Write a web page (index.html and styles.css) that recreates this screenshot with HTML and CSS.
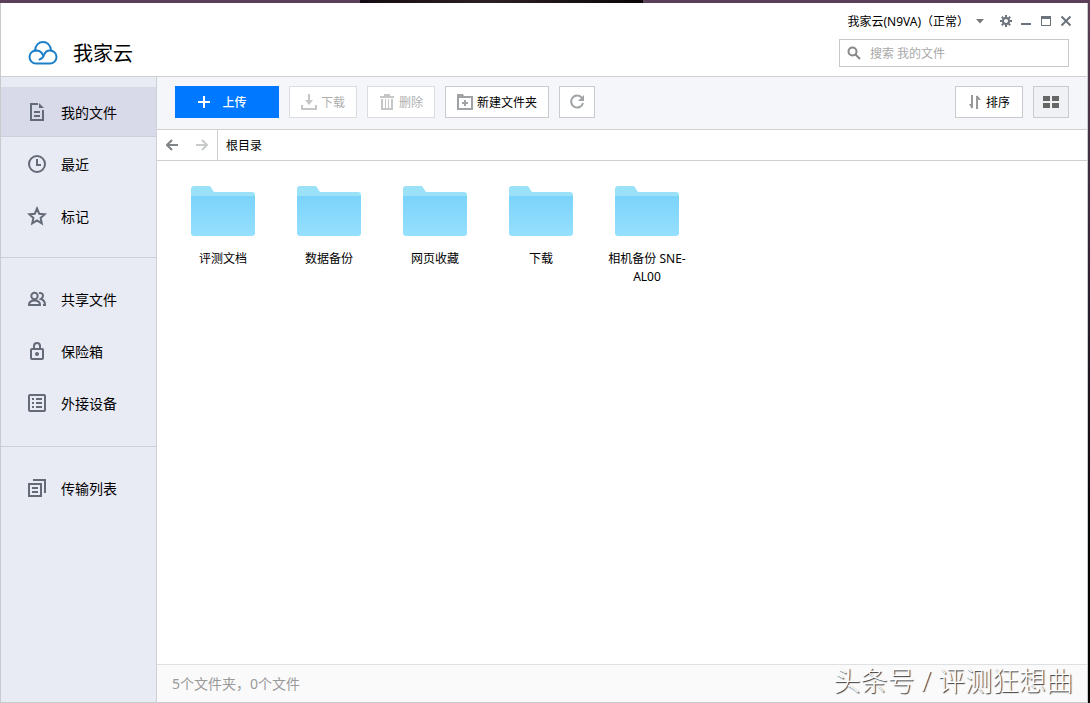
FILE: index.html
```html
<!DOCTYPE html>
<html lang="zh-CN">
<head>
    <meta charset="UTF-8">
    <meta name="viewport" content="width=device-width, initial-scale=1.0">
    <title>我家云</title>
    <link rel="stylesheet" href="styles.css">
</head>
<body>
    <div class="window">
        <header class="header">
            <div class="brand">
                <svg class="logo" viewBox="0 0 30 26" fill="none" stroke="#1c7fc8" stroke-width="2" stroke-linecap="round">
                    <path d="M8 10.500A6.500 6.500 0 0 0 8 23.500h14a6.500 6.500 0 0 0 0-13c-3 0-5 1.500-6 4.500s-2 4-4.500 4.500"></path>
                    <path d="M7 10.500C7.500 5 11 2 15 2s7.500 3 8 8.500"></path>
                    <path d="M8 10.500c3 0 5.500 1.200 7 4.500"></path>
                </svg>
                <h1>我家云</h1>
            </div>
            <div class="header-right">
                <div class="window-bar">
                    <button class="device" type="button">我家云(N9VA)（正常）
                        <svg width="8" height="5" viewBox="0 0 8 5" fill="#777"><path d="M0 0h8L4 4.500z"></path></svg>
                    </button>
                    <button class="win-btn" type="button" aria-label="设置">
                        <svg width="12" height="12" viewBox="0 0 12 12" fill="none" stroke="#6b737c">
                            <circle cx="6" cy="6" r="3" stroke-width="2"></circle>
                            <path d="M6 0v2M6 10v2M0 6h2M10 6h2M1.800 1.800l1.400 1.400M8.800 8.800l1.400 1.400M10.200 1.800L8.800 3.200M3.200 8.800l-1.400 1.400" stroke-width="2"></path>
                        </svg>
                    </button>
                    <button class="win-btn" type="button" aria-label="最小化">
                        <svg width="12" height="12" viewBox="0 0 12 12" fill="#6b737c"><path d="M1 8h10v2H1z"></path></svg>
                    </button>
                    <button class="win-btn" type="button" aria-label="最大化">
                        <svg width="12" height="12" viewBox="0 0 12 12" fill="#6b737c"><path d="M1 1h10v10H1zM2 4v6h8V4z" fill-rule="evenodd"></path></svg>
                    </button>
                    <button class="win-btn" type="button" aria-label="关闭">
                        <svg width="12" height="12" viewBox="0 0 12 12" stroke="#6b737c" stroke-width="2"><path d="M1.500 1.500l9 9M10.500 1.500l-9 9"></path></svg>
                    </button>
                </div>
                <label class="search">
                    <svg width="14" height="14" viewBox="0 0 14 14" fill="none" stroke="#888" stroke-width="2">
                        <circle cx="5.500" cy="5.500" r="4"></circle>
                        <path d="M8.500 8.500l4.500 4.500"></path>
                    </svg>
                    <input type="text" placeholder="搜索 我的文件" aria-label="搜索">
                </label>
            </div>
        </header>

        <div class="content">
            <nav class="sidebar">
                <div class="nav-group nav-main">
                    <a class="nav-item active" href="#">
                        <svg class="nav-icon" viewBox="0 0 20 20" fill="none" stroke="#646a78" stroke-width="2">
                            <path d="M11 2H4v16h12V8M7 10h6M7 14h6"></path>
                            <path d="M12 1l5 5h-5z" fill="#646a78" stroke="none"></path>
                        </svg>
                        我的文件
                    </a>
                    <a class="nav-item" href="#">
                        <svg class="nav-icon" viewBox="0 0 20 20" fill="none" stroke="#646a78" stroke-width="2">
                            <circle cx="10" cy="10" r="8"></circle>
                            <path d="M10 5v6h4"></path>
                        </svg>
                        最近
                    </a>
                    <a class="nav-item" href="#">
                        <svg class="nav-icon" viewBox="0 0 20 20" fill="none" stroke="#646a78" stroke-width="2">
                            <path d="M10 2.500l2.200 5.200 5.600.5-4.200 3.700 1.200 5.500L10 14.500l-4.800 2.900 1.200-5.500L2.200 8.200l5.600-.5z"></path>
                        </svg>
                        标记
                    </a>
                </div>
                <div class="nav-group">
                    <a class="nav-item" href="#">
                        <svg class="nav-icon" viewBox="0 0 20 20" fill="none" stroke="#646a78" stroke-width="2">
                            <circle cx="7.500" cy="7" r="3.200"></circle>
                            <path d="M2 16c0-3 2-4.500 5.500-4.500S13 13 13 16zM12 4c2.500-.5 4 .8 4 2.800 0 1.700-1 2.700-2 3.200 2.500.8 4 2.500 4 6h-2"></path>
                        </svg>
                        共享文件
                    </a>
                    <a class="nav-item" href="#">
                        <svg class="nav-icon" viewBox="0 0 20 20" fill="none" stroke="#646a78" stroke-width="2">
                            <rect x="4" y="8" width="12" height="10" rx="1"></rect>
                            <path d="M7 8V5a3 3 0 0 1 6 0v3"></path>
                            <circle cx="10" cy="13" r="2" fill="#646a78" stroke="none"></circle>
                        </svg>
                        保险箱
                    </a>
                    <a class="nav-item" href="#">
                        <svg class="nav-icon" viewBox="0 0 20 20" fill="none" stroke="#646a78" stroke-width="2">
                            <rect x="2" y="2" width="16" height="16" rx="1"></rect>
                            <path d="M5 6h2M5 10h2M5 14h2M9 6h6M9 10h6M9 14h6"></path>
                        </svg>
                        外接设备
                    </a>
                </div>
                <div class="nav-group">
                    <a class="nav-item" href="#">
                        <svg class="nav-icon" viewBox="0 0 20 20" fill="none" stroke="#646a78" stroke-width="2">
                            <path d="M2 6h12v12H2zM5 10h6M5 14h6M6 2h12v13"></path>
                        </svg>
                        传输列表
                    </a>
                </div>
            </nav>

            <main class="main">
                <div class="toolbar">
                    <button class="btn btn-primary" type="button">
                        <svg width="12" height="12" viewBox="0 0 12 12" stroke="#fff" stroke-width="2"><path d="M6 0v12M0 6h12"></path></svg>
                        上传
                    </button>
                    <button class="btn" type="button" disabled>
                        <svg width="16" height="16" viewBox="0 0 16 16" fill="none" stroke="#c4c6c8" stroke-width="2">
                            <path d="M8 0v7M1 11v4h14v-4"></path>
                            <path d="M4 6h8l-4 5z" fill="#c4c6c8" stroke="none"></path>
                        </svg>
                        下载
                    </button>
                    <button class="btn" type="button" disabled>
                        <svg width="16" height="16" viewBox="0 0 16 16" fill="none" stroke="#c4c6c8" stroke-width="2">
                            <path d="M1 3h14M5 1h6M3 5v10h10V5"></path>
                            <path d="M6.500 5v9M9.500 5v9" stroke-width="1"></path>
                        </svg>
                        删除
                    </button>
                    <button class="btn" type="button">
                        <svg width="16" height="16" viewBox="0 0 16 16" fill="none" stroke="#a0a3a5" stroke-width="2">
                            <path d="M1 3h14v12H1z"></path>
                            <path d="M8 6v6M5 9h6"></path>
                            <path d="M0 0h6l2 4H0z" fill="#a0a3a5" stroke="none"></path>
                        </svg>
                        新建文件夹
                    </button>
                    <button class="btn btn-square" type="button" aria-label="刷新">
                        <svg width="16" height="16" viewBox="0 0 16 16" fill="none" stroke="#a0a3a5" stroke-width="2">
                            <path d="M13 4a6 6 0 1 0 1 5"></path>
                            <path d="M15 1v6H9z" fill="#a0a3a5" stroke="none"></path>
                        </svg>
                    </button>
                    <button class="btn btn-sort" type="button">
                        <svg width="14" height="16" viewBox="0 0 14 16" fill="none" stroke="#999" stroke-width="2">
                            <path d="M4 1v13M9 15V2"></path>
                            <path d="M1 10h3v5zM9 1l4 5H9z" fill="#999" stroke="none"></path>
                        </svg>
                        排序
                    </button>
                    <button class="btn btn-square btn-view" type="button" aria-label="网格视图">
                        <svg width="16" height="12" viewBox="0 0 16 12" fill="#666"><path d="M0 0h7v5H0zM9 0h7v5H9zM0 7h7v5H0zM9 7h7v5H9z"></path></svg>
                    </button>
                </div>

                <div class="path-bar">
                    <div class="history">
                        <button type="button" aria-label="后退">
                            <svg width="12" height="12" viewBox="0 0 12 12" fill="none" stroke="#808488" stroke-width="2"><path d="M12 6H1M6 1L1 6l5 5"></path></svg>
                        </button>
                        <button type="button" aria-label="前进" disabled>
                            <svg width="12" height="12" viewBox="0 0 12 12" fill="none" stroke="#c8cacc" stroke-width="2"><path d="M0 6h11M6 1l5 5-5 5"></path></svg>
                        </button>
                    </div>
                    <a class="crumb" href="#">根目录</a>
                </div>

                <!-- shared folder shape -->
                <svg class="defs" width="0" height="0" aria-hidden="true">
                    <defs>
                        <linearGradient id="folder-fill" x1="0" y1="0" x2="0" y2="1">
                            <stop offset="0" stop-color="#7bd3fa"></stop>
                            <stop offset="1" stop-color="#96e0ff"></stop>
                        </linearGradient>
                        <symbol id="folder" viewBox="0 0 64 50">
                            <path d="M0 3a3 3 0 0 1 3-3h15c3 0 3 6 6 6h37a3 3 0 0 1 3 3v20H0z" fill="#9be2f8"></path>
                            <path d="M0 10h64v37a3 3 0 0 1-3 3H3a3 3 0 0 1-3-3z" fill="url(#folder-fill)"></path>
                        </symbol>
                    </defs>
                </svg>

                <div class="files">
                    <a class="file" href="#"><svg class="folder"><use href="#folder"></use></svg>评测文档</a>
                    <a class="file" href="#"><svg class="folder"><use href="#folder"></use></svg>数据备份</a>
                    <a class="file" href="#"><svg class="folder"><use href="#folder"></use></svg>网页收藏</a>
                    <a class="file" href="#"><svg class="folder"><use href="#folder"></use></svg>下载</a>
                    <a class="file" href="#"><svg class="folder"><use href="#folder"></use></svg>相机备份 SNE-AL00</a>
                </div>

                <footer class="status">5个文件夹，0个文件</footer>
            </main>
        </div>
    </div>
    <div class="watermark">头条号 / 评测狂想曲</div>
</body>
</html>
```

FILE: styles.css
```css
* {
    box-sizing: border-box;
}
body {
    margin: 0;
    padding: 3px 2px 0 0;
    min-height: 100vh;
    display: flex;
    background:
        linear-gradient(90deg, transparent 33%, #140c12 33%, #2c2026 45%, #0a0608 59%, transparent 59%) top / 100% 3px no-repeat,
        linear-gradient(#5c4058, #2c2030 40%, #000 80%);
    font-family: "Noto Sans", "Noto Sans CJK SC", sans-serif;
    font-size: 12px;
    color: #000;
}
button,
input {
    font: inherit;
    color: inherit;
}
button {
    padding: 0;
    border: 0;
    background: none;
}
a {
    color: inherit;
    text-decoration: none;
}
svg {
    flex-shrink: 0;
}
.window {
    flex: 1;
    display: flex;
    flex-direction: column;
    border: 1px solid #c8cacd;
    border-top: 0;
    background: #fff;
}

/* header */
.header {
    display: flex;
    justify-content: space-between;
    height: 74px;
    padding: 8px 18px 0 27px;
    border-bottom: 1px solid #cfcfd1;
}
.brand {
    display: flex;
    align-items: center;
    gap: 15px;
    padding-top: 18px;
}
.logo {
    width: 30px;
    height: 26px;
}
.brand h1 {
    margin: 0;
    font-size: 20px;
    font-weight: 400;
}
.header-right {
    width: 230px;
}
.window-bar {
    display: flex;
    align-items: center;
    justify-content: flex-end;
    gap: 8px;
    height: 20px;
    margin: 0 -3px 8px 0;
}
.device {
    display: flex;
    align-items: center;
    gap: 7px;
    margin-right: 8px;
    white-space: nowrap;
}
.win-btn {
    display: flex;
}
.search {
    display: flex;
    align-items: center;
    gap: 9px;
    height: 28px;
    padding: 0 7px;
    border: 1px solid #c6c8ca;
}
.search input {
    flex: 1;
    min-width: 0;
    padding: 0;
    border: 0;
    outline: 0;
}
.search input::placeholder {
    color: #a8a8a8;
}

/* sidebar */
.content {
    flex: 1;
    display: flex;
}
.sidebar {
    width: 156px;
    border-right: 1px solid #cfcfd6;
    background: #e9ebf4;
}
.nav-group {
    display: flex;
    flex-direction: column;
    gap: 2px;
    padding: 16px 0 18px;
    border-bottom: 1px solid #cdced6;
}
.nav-main {
    padding: 10px 0 16px;
}
.nav-group:last-child {
    border-bottom: 0;
}
.nav-item {
    display: flex;
    align-items: center;
    gap: 14px;
    height: 50px;
    padding-left: 26px;
    font-size: 14px;
}
.nav-item.active {
    background: #d9dae9;
    box-shadow: inset 0 -1px #cdcfde;
}
.nav-icon {
    width: 20px;
    height: 20px;
}

/* main area */
.main {
    flex: 1;
    display: flex;
    flex-direction: column;
}
.toolbar {
    display: flex;
    align-items: center;
    gap: 10px;
    height: 53px;
    padding: 0 18px 2px;
    border-bottom: 1px solid #cfd0d2;
    background: #f5f6f9;
}
.btn {
    display: flex;
    align-items: center;
    justify-content: center;
    gap: 4px;
    min-width: 68px;
    height: 32px;
    padding: 0 11px;
    border: 1px solid #c9cbce;
    background: #fff;
    white-space: nowrap;
}
.btn:disabled {
    border-color: #dcdde0;
    color: #b0b0b0;
}
.btn-primary {
    gap: 12px;
    width: 104px;
    padding-right: 20px;
    border-color: #0078ff;
    background: #0078ff;
    color: #fff;
    font-weight: 500;
}
.btn-square {
    width: 36px;
    min-width: 0;
    padding: 0;
}
.btn-sort {
    margin-left: auto;
}
.btn-view {
    background: #f0f1f4;
}
.path-bar {
    display: flex;
    height: 31px;
    border-bottom: 1px solid #cfcfd1;
}
.history {
    display: flex;
    align-items: center;
    gap: 18px;
    width: 61px;
    padding-left: 9px;
    border-right: 1px solid #cfcfd1;
}
.history button {
    display: flex;
}
.crumb {
    align-self: center;
    padding-left: 8px;
}
.defs {
    position: absolute;
}
.files {
    flex: 1;
    display: flex;
    flex-wrap: wrap;
    align-content: flex-start;
    gap: 16px;
    padding: 25px 21px;
}
.file {
    display: flex;
    flex-direction: column;
    align-items: center;
    width: 90px;
    line-height: 18px;
    text-align: center;
}
.folder {
    width: 64px;
    height: 50px;
    margin-bottom: 14px;
}
.status {
    height: 38px;
    padding-left: 15px;
    border-top: 1px solid #dfe0e2;
    background: #fafafa;
    color: #999;
    font-size: 14px;
    line-height: 37px;
}
.watermark {
    position: absolute;
    right: 17px;
    bottom: 4px;
    color: #fff;
    font-size: 27px;
    font-weight: 300;
    text-shadow: 1px 1px 1px #333;
}
```
